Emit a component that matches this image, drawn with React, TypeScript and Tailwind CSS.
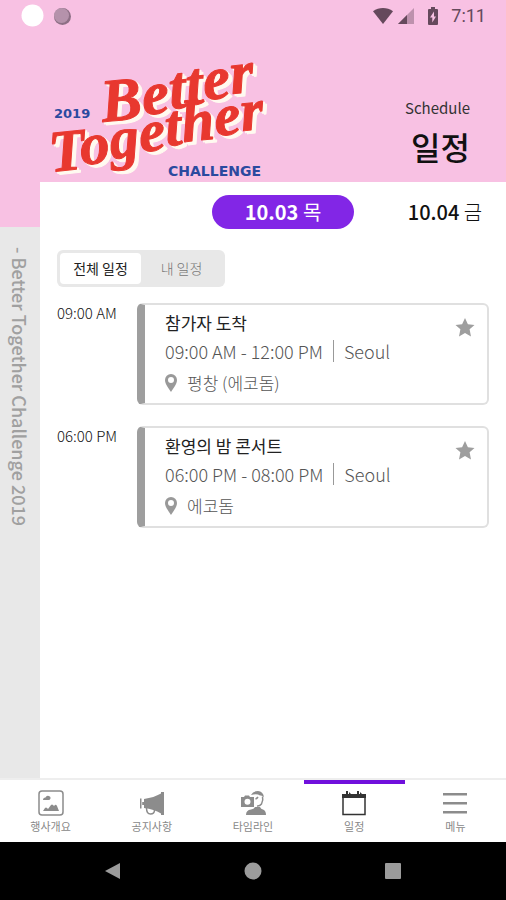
import { useState } from 'react';
import clsx from 'clsx';

type Filter = 'all' | 'mine';

interface Session {
  start: string;
  title: string;
  time: string;
  city: string;
  place: string;
}

const sessions: Session[] = [
  { start: '09:00 AM', title: '참가자 도착', time: '09:00 AM - 12:00 PM', city: 'Seoul', place: '평창 (에코돔)' },
  { start: '06:00 PM', title: '환영의 밤 콘서트', time: '06:00 PM - 08:00 PM', city: 'Seoul', place: '에코돔' },
];

const days = [
  { date: '10.03', day: '목' },
  { date: '10.04', day: '금' },
];

const filters: { key: Filter; label: string }[] = [
  { key: 'all', label: '전체 일정' },
  { key: 'mine', label: '내 일정' },
];

function StatusBar() {
  return (
    <div className="flex h-8 items-center justify-between pr-5 pl-5">
      <div className="flex items-center gap-2">
        <svg width="24" height="24" viewBox="0 0 24 24">
          <circle cx="12.5" cy="11.5" r="11" fill="#fff" />
        </svg>
        <svg width="20" height="20" viewBox="0 0 20 20">
          <circle cx="10.5" cy="10.5" r="8.5" fill="#8d6f85" />
          <circle cx="9.5" cy="9.5" r="7.5" fill="#b592ab" />
        </svg>
      </div>
      <div className="flex items-center gap-1 text-[#65495c]">
        <svg width="22" height="18" viewBox="0 0 22 18" fill="currentColor">
          <path d="M1 4.2C7 -.2 15 -.2 21 4.2L11 17Z" />
        </svg>
        <svg width="17" height="18" viewBox="0 0 17 18" fill="currentColor">
          <path d="M0 17 16 1V17Z" opacity=".4" />
          <path d="M0 17 9 8V17Z" />
        </svg>
        <svg className="ml-2" width="12" height="20" viewBox="0 0 12 20" fill="currentColor">
          <path fillRule="evenodd" d="M4 1h4v2h2q1 0 1 1v14q0 1-1 1H2q-1 0-1-1V4q0-1 1-1h2ZM7 5.500 3 11.500h2.300V16.500L9 10.500H7Z" />
        </svg>
        <span className="ml-2 font-[Roboto] text-lg leading-8">7:11</span>
      </div>
    </div>
  );
}

function Logo() {
  return (
    <svg
      className="overflow-visible"
      width="240"
      height="132"
      viewBox="40 50 240 132"
      role="img"
      aria-label="2019 Better Together Challenge"
    >
      {/* each letter climbs one step, with a cream shadow behind */}
      <g
        className="[filter:drop-shadow(2px_1px_0_#fffaf0)_drop-shadow(2px_2px_0_#fffaf0)]"
        fontFamily="'Liberation Serif', serif"
        fontWeight="bold"
        fontStyle="italic"
        fill="#e8382f"
        stroke="#e8382f"
        strokeWidth="1"
        strokeLinejoin="round"
      >
        <text x="103" y="122" dy="0 -7 -6 -4 -5 -6" rotate="-6" fontSize="61">
          Better
        </text>
        <text x="51" y="172" dy="0 -7 -6 -7 -6 -4 -6 -5" rotate="-6" fontSize="59">
          Together
        </text>
      </g>
      <g fill="#2b4a9f" fontFamily="'DejaVu Sans', sans-serif" fontWeight="bold">
        <text x="54" y="118" fontSize="13">2019</text>
        <text x="168" y="176" fontSize="14">CHALLENGE</text>
      </g>
    </svg>
  );
}

function PinIcon() {
  return (
    <svg width="12" height="18" viewBox="0 0 12 18" fill="#999" aria-hidden="true">
      <path fillRule="evenodd" d="M6 0a6 6 0 0 1 6 6c0 4-3.500 8-6 12C3.500 14 0 10 0 6a6 6 0 0 1 6-6Zm0 3a3 3 0 1 0 0 6 3 3 0 0 0 0-6Z" />
    </svg>
  );
}

function SessionRow({ session }: { session: Session }) {
  const [starred, setStarred] = useState(false);

  return (
    <li className="flex">
      <time className="w-20 shrink-0 text-[15px] leading-5 font-light whitespace-nowrap text-[#111]">{session.start}</time>
      <article className="flex min-w-0 flex-1 items-start justify-between rounded-md border-2 border-l-8 border-[#e0e0e0] border-l-[#9e9e9e] pt-1 pr-3 pb-0.5 pl-5">
        <div className="font-light text-[#555]">
          <h2 className="text-[17px] leading-7 font-normal text-[#222]">{session.title}</h2>
          <p className="flex items-center text-lg leading-7 whitespace-nowrap">
            {session.time}
            <span className="mx-2.5 h-[22px] w-px bg-[#999]" />
            {session.city}
          </p>
          <p className="flex items-center gap-2.5 text-[17px] leading-9">
            <PinIcon />
            {session.place}
          </p>
        </div>
        <button
          aria-label="내 일정에 추가"
          aria-pressed={starred}
          onClick={() => setStarred(!starred)}
          className={clsx('mt-2', starred ? 'text-[#8226e6]' : 'text-[#9e9e9e]')}
        >
          <svg width="20" height="20" viewBox="0 0 20 20" fill="currentColor">
            <path d="M10 1 12.900 7.300 19.500 8 14.600 12.300 16 19.500 10 16 4 19.500 5.400 12.300.500 8 7.100 7.300Z" />
          </svg>
        </button>
      </article>
    </li>
  );
}

const tabs = [
  {
    label: '행사개요',
    icon: (
      <>
        <rect x="1" y="1" width="24" height="24" rx="3" fill="none" stroke="currentColor" strokeWidth="1.500" />
        <path d="M5 10q0-2.500 2.500-2.500Q8.500 5 11 6q2 .5 1.500 2.500Q12 10 10.500 10ZM5 21l2-3q1-1 2 0l1 1 3-4q1-1 2 0l1 1 1-1q1-1 2 1l2 5Z" />
      </>
    ),
  },
  {
    label: '공지사항',
    icon: (
      <>
        <path d="M5 9Q15 7.500 22 3.500V2h3v23h-3v-1.500Q15 19 5 18ZM1 8.500h1.500v10H1ZM3.200 12h2v3h-2Z" />
        <path d="M7.500 18q0 6 4 6t4-4" fill="none" stroke="currentColor" strokeWidth="1.500" />
      </>
    ),
  },
  {
    label: '타임라인',
    icon: (
      <>
        <path fillRule="evenodd" d="M1 7h3l1-1.500h4L10 7h4v10H1ZM7.500 8.800a3 3 0 1 0 0 6 3 3 0 0 0 0-6Z" />
        <path d="M11 5q2-4 7-4 5 .5 6 6-2-2-4-1.500Q17 3.500 11 5Z" />
        <path d="M22.500 6.500q1 4-1 7.500-2 2.500-4.500 2M15.500 9q1.500-.5 2.500-2" fill="none" stroke="currentColor" strokeWidth="1.500" />
        <path d="M6 25q0-5 5-5.500 3-.5 4-2.500h5q1 2 3 2.500 3 1 3 5.500Z" />
      </>
    ),
  },
  {
    label: '일정',
    icon: (
      <>
        <path d="M2 7h22v17.500H2Z" fill="none" stroke="currentColor" strokeWidth="1.500" />
        <path d="M1 4h4V1h2v3h1V2l2 2h6V1h2v3h1V2l2 2h4v4H1Z" />
      </>
    ),
  },
  {
    label: '메뉴',
    icon: <path d="M1 3h24v2.500H1ZM1 12h24v2.500H1ZM1 21h24v2.500H1Z" />,
  },
];

function TabBar() {
  const active = 3;
  return (
    <nav className="grid grid-cols-5 border-t-2 border-[#eee] bg-white">
      {tabs.map((tab, i) => (
        <a
          key={tab.label}
          href="#"
          className={clsx(
            'flex h-[62px] flex-col items-center border-t-4 pt-1.5 text-[11px] leading-4 text-[#888]',
            i === active ? 'border-[#7010dc]' : 'border-transparent'
          )}
        >
          <svg
            className={clsx('mb-0.5', i === active ? 'text-[#333]' : 'text-[#8c8c8c]')}
            width="26"
            height="26"
            viewBox="0 0 26 26"
            fill="currentColor"
            aria-hidden="true"
          >
            {tab.icon}
          </svg>
          {tab.label}
        </a>
      ))}
    </nav>
  );
}

function SystemNav() {
  return (
    <div className="flex h-[58px] items-center justify-center gap-[122px] bg-black text-[#9b9b9b]">
      <button aria-label="Back">
        <svg width="18" height="18" viewBox="0 0 18 18" fill="currentColor">
          <path d="M1 9 16 1V17Z" />
        </svg>
      </button>
      <button aria-label="Home">
        <svg width="18" height="18" viewBox="0 0 18 18" fill="currentColor">
          <circle cx="9" cy="9" r="8.500" />
        </svg>
      </button>
      <button aria-label="Recent apps">
        <svg width="18" height="18" viewBox="0 0 18 18" fill="currentColor">
          <rect x="1" y="1" width="16" height="16" rx="1" />
        </svg>
      </button>
    </div>
  );
}

export default function App() {
  const [filter, setFilter] = useState<Filter>('all');
  const [selected, setSelected] = useState('10.03');

  return (
    <div className="flex min-h-screen flex-col bg-white font-['Noto_Sans_CJK_KR',sans-serif] text-[#111]">
      <header className="bg-[#f8c1e3]">
        <StatusBar />
        <div className="flex items-end justify-between pt-[18px] pr-9 pl-10">
          <Logo />
          <div className="pb-3 text-right">
            <p className="text-[15px] leading-7 text-[#333]">Schedule</p>
            <h1 className="text-[32px] leading-[48px] font-medium">일정</h1>
          </div>
        </div>
      </header>

      <div className="flex flex-1">
        {/* Side title */}
        <aside className="flex w-10 shrink-0 flex-col bg-[#e8e8e8]">
          <div className="h-[45px] bg-[#f8c1e3]" />
          <p className="mt-5 text-lg leading-10 font-medium whitespace-nowrap text-[#a0a0a0] [writing-mode:vertical-rl]">
            - Better Together Challenge 2019
          </p>
        </aside>

        <main className="min-w-0 flex-1 overflow-hidden">
          {/* Day picker */}
          <div className="-mr-5 grid grid-cols-3 pt-[13px]">
            {days.map((d, i) => (
              <button
                key={d.date}
                onClick={() => setSelected(d.date)}
                className={clsx(
                  'mx-2.5 h-[34px] rounded-full text-xl leading-8',
                  i === 0 && 'col-start-2',
                  selected === d.date && 'bg-[#8226e6] text-white'
                )}
              >
                <span className={selected === d.date ? 'font-bold' : 'font-medium'}>{d.date}</span>{' '}
                <span className={selected === d.date ? 'font-normal' : 'font-light'}>{d.day}</span>
              </button>
            ))}
          </div>

          <div className="px-[17px] pt-[21px]">
            <div className="grid w-[168px] grid-cols-2 rounded-md bg-[#e8e8e8] p-[3px]">
              {filters.map((f) => (
                <button
                  key={f.key}
                  onClick={() => setFilter(f.key)}
                  className={clsx(
                    'h-[31px] rounded pb-0.5 text-sm',
                    filter === f.key ? 'bg-white text-[#222]' : 'font-light text-[#777]'
                  )}
                >
                  {f.label}
                </button>
              ))}
            </div>

            <ul className="mt-4 flex flex-col gap-[21px]">
              {sessions.map((s) => (
                <SessionRow key={s.start} session={s} />
              ))}
            </ul>
          </div>
        </main>
      </div>

      <TabBar />
      <SystemNav />
    </div>
  );
}
